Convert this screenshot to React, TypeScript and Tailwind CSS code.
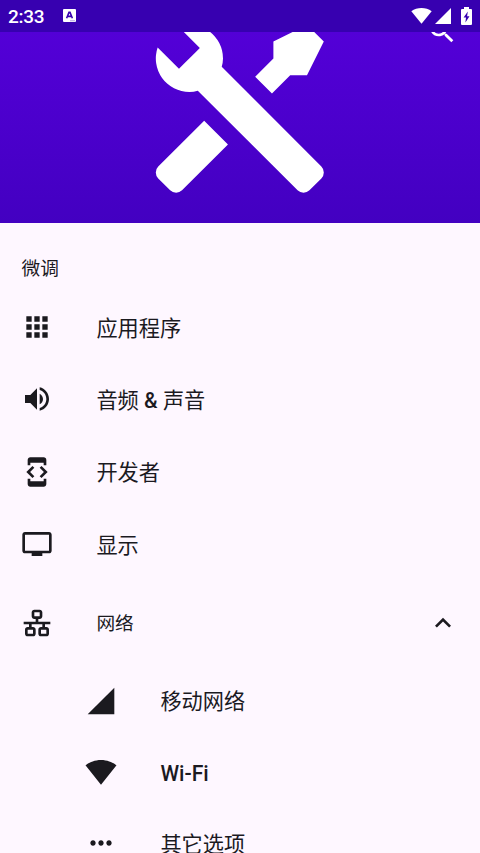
import type { ReactNode } from 'react';

const icons = {
  apps: 'M4 8h4V4H4v4zm6 12h4v-4h-4v4zm-6 0h4v-4H4v4zm0-6h4v-4H4v4zm6 0h4v-4h-4v4zm6-10v4h4V4h-4zm-6 4h4V4h-4v4zm6 6h4v-4h-4v4zm0 6h4v-4h-4v4z',
  volume:
    'M3 9v6h4l5 5V4L7 9H3zm13.5 3c0-1.77-1.02-3.29-2.5-4.03v8.05c1.48-.73 2.5-2.25 2.5-4.02zM14 3.23v2.06c2.89.86 5 3.54 5 6.71s-2.11 5.85-5 6.71v2.06c4.01-.91 7-4.49 7-8.77s-2.99-7.86-7-8.77z',
  developer:
    'M7 5h10v2h2V3c0-1.1-.9-1.99-2-1.99L7 1c-1.1 0-2 .9-2 2v4h2V5zm8.41 11.59L20 12l-4.59-4.59L14 8.83 17.17 12 14 15.17l1.41 1.42zM10 15.17L6.83 12 10 8.83 8.59 7.41 4 12l4.59 4.59L10 15.17zM17 19H7v-2H5v4c0 1.1.9 2 2 2h10c1.1 0 2-.9 2-2v-4h-2v2z',
  display:
    'M21 3H3c-1.1 0-2 .9-2 2v12c0 1.1.9 2 2 2h5v2h8v-2h5c1.1 0 1.99-.9 1.99-2L23 5c0-1.1-.9-2-2-2zm0 14H3V5h18v12z',
  lan: 'M10,2C8.89,2 8,2.89 8,4V7C8,8.11 8.89,9 10,9H11V11H2V13H6V15H5C3.89,15 3,15.89 3,17V20C3,21.11 3.89,22 5,22H9C10.11,22 11,21.11 11,20V17C11,15.89 10.11,15 9,15H8V13H16V15H15C13.89,15 13,15.89 13,17V20C13,21.11 13.89,22 15,22H19C20.11,22 21,21.11 21,20V17C21,15.89 20.11,15 19,15H18V13H22V11H13V9H14C15.11,9 16,8.11 16,7V4C16,2.89 15.11,2 14,2H10M10,4H14V7H10V4M5,17H9V20H5V17M15,17H19V20H15V17Z',
  signal: 'M2 22h20V2z',
  wifi: 'M12.01 21.49L23.64 7c-.45-.34-4.93-4-11.64-4C5.28 3 .81 6.66.36 7l11.63 14.49.01.01.01-.01z',
  more: 'M6 10c-1.1 0-2 .9-2 2s.9 2 2 2 2-.9 2-2-.9-2-2-2zm12 0c-1.1 0-2 .9-2 2s.9 2 2 2 2-.9 2-2-.9-2-2-2zm-6 0c-1.1 0-2 .9-2 2s.9 2 2 2 2-.9 2-2-.9-2-2-2z',
  chevronUp: 'M7.41 15.41L12 10.83l4.59 4.58L18 14l-6-6-6 6z',
  search:
    'M15.5 14h-.79l-.28-.27C15.41 12.59 16 11.11 16 9.5 16 5.91 13.09 3 9.5 3S3 5.91 3 9.5 5.91 16 9.5 16c1.61 0 3.09-.59 4.23-1.57l.27.28v.79l5 4.99L20.49 19l-4.99-5zm-6 0C7.01 14 5 11.99 5 9.5S7.01 5 9.5 5 14 7.01 14 9.5 11.99 14 9.5 14z',
  tools:
    'M21.71 20.29L20.29 21.71A1 1 0 0 1 18.88 21.71L7 9.85A3.81 3.81 0 0 1 6 10A4 4 0 0 1 2.22 4.7L4.76 7.24L5.29 6.71L6.71 5.29L7.24 4.76L4.7 2.22A4 4 0 0 1 10 6A3.81 3.81 0 0 1 9.85 7L21.71 18.88A1 1 0 0 1 21.71 20.29M2.29 18.88A1 1 0 0 0 2.29 20.29L3.71 21.71A1 1 0 0 0 5.12 21.71L10.59 16.25L7.76 13.42M20 2L16 4V6L13.83 8.17L15.83 10.17L18 8H20L22 4Z',
};

type IconName = keyof typeof icons;

function Icon({ name, className = 'size-8' }: { name: IconName; className?: string }) {
  return (
    <svg viewBox="0 0 24 24" fill="currentColor" className={`shrink-0 ${className}`}>
      <path d={icons[name]} />
    </svg>
  );
}

function StatusBar() {
  return (
    <div className="flex h-8 shrink-0 items-center bg-[#3700b0] px-2 text-white">
      <span className="w-[37px] pt-px text-[19px] leading-8 font-medium tracking-[-0.3px]">2:33</span>
      <svg viewBox="0 0 13 13" className="mb-px ml-[17.5px] size-[13px]">
        <rect width="13" height="13" rx="1" fill="white" />
        <path d="M3.6 9.2 6 3.4h1l2.4 5.8M4.6 7.4h3.8" fill="none" stroke="#3700b0" strokeWidth="1.6" />
        <path d="M7 11.8h5" stroke="#3700b0" strokeOpacity=".4" strokeWidth="1" />
      </svg>
      <svg viewBox="0 0 21 16" fill="currentColor" className="ml-auto h-4 w-[21px]">
        <path d="M10.5 15.8.3 3.2C3.3 1 6.8 0 10.5 0s7.2 1 10.2 3.2z" />
      </svg>
      <svg viewBox="0 0 16 16" fill="currentColor" className="ml-[3px] size-4">
        <path d="M0 16h16V0z" />
      </svg>
      <svg viewBox="0 0 11 18" className="ml-2.5 h-[18px] w-[11px]">
        <path d="M3 0h5v2h2a1 1 0 0 1 1 1v14a1 1 0 0 1-1 1H1a1 1 0 0 1-1-1V3a1 1 0 0 1 1-1h2z" fill="white" />
        <path d="M6.8 4.6 2.6 10.6h2.4L4.4 15.4l4.100-6.200H6.100z" fill="#3700b0" />
      </svg>
    </div>
  );
}

function Header() {
  return (
    <header className="relative flex h-[191px] shrink-0 justify-center overflow-hidden bg-linear-to-b from-[#5300d7] to-[#4300c1] text-white">
      <Icon name="tools" className="mt-[-24.5px] size-[201.6px]" />
      <Icon name="search" className="absolute top-[-17.3px] left-[426px] size-8" />
    </header>
  );
}

interface RowProps {
  icon: IconName;
  children: ReactNode;
  nested?: boolean;
}

function Row({ icon, children, nested }: RowProps) {
  return (
    <div
      className={`flex shrink-0 items-center gap-[43px] ${nested ? 'h-[71.3px] pl-[85.4px]' : 'h-[72.3px] pl-[21.4px]'}`}
    >
      <Icon name={icon} />
      <span className="pt-[3px] text-[21.2px] leading-8 whitespace-nowrap">{children}</span>
    </div>
  );
}

export default function App() {
  return (
    <div className="flex h-[853px] w-[480px] flex-col overflow-hidden bg-[#fef7ff] font-['Roboto','Noto_Sans_CJK_SC',sans-serif] text-[#1b1a1f]">
      <StatusBar />
      <Header />
      <h2 className="mt-[30px] h-8 shrink-0 pl-[21.5px] text-[18.7px] leading-8">微调</h2>
      <div className="mt-1.5 flex flex-col">
        <Row icon="apps">应用程序</Row>
        <Row icon="volume">
          音频 <span className="font-medium">&amp;</span> 声音
        </Row>
        <Row icon="developer">开发者</Row>
        <Row icon="display">显示</Row>
        <div className="flex h-[85px] items-center px-[21.4px]">
          <Icon name="lan" />
          <span className="ml-[43px] pt-[3px] text-[18.7px] leading-8">网络</span>
          <Icon name="chevronUp" className="ml-auto size-8" />
        </div>
        <Row icon="signal" nested>
          移动网络
        </Row>
        <Row icon="wifi" nested>
          <span className="font-medium">Wi-Fi</span>
        </Row>
        <Row icon="more" nested>
          其它选项
        </Row>
      </div>
    </div>
  );
}
